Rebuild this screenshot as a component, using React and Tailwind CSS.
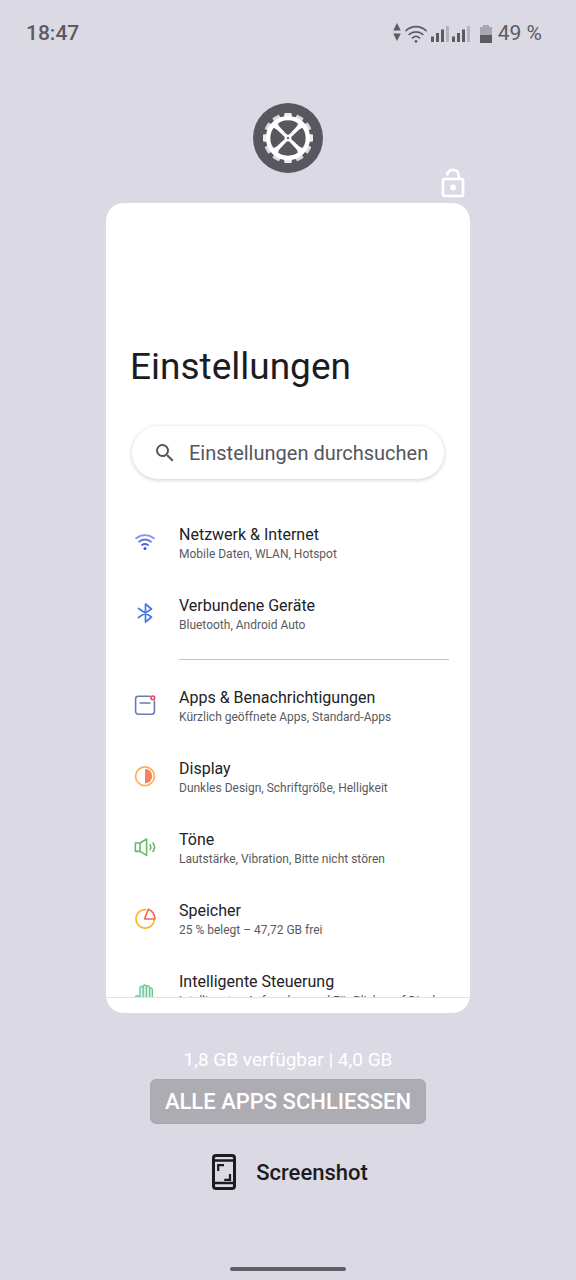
import { useState } from "react";

const WifiIcon = () => (
  <svg viewBox="0 0 24 24" className="w-6 h-6" fill="none" strokeWidth="1.8" strokeLinecap="round">
    <path d="M3 8.2c5.5-4.200 12.500-4.200 18 0" stroke="#8492ec" />
    <path d="M6 11.800c3.700-2.800 8.300-2.800 12 0" stroke="#6478e6" />
    <path d="M9 15c1.900-1.300 4.100-1.300 6 0" stroke="#4d62e0" />
    <circle cx="12" cy="18.600" r="1.500" fill="#3f52dc" />
  </svg>
);

const BluetoothIcon = () => (
  <svg
    viewBox="0 0 24 24"
    className="w-6 h-6"
    fill="none"
    stroke="#4a78e0"
    strokeWidth="1.7"
    strokeLinecap="round"
    strokeLinejoin="round"
  >
    <path d="M5.500 7.500L18.500 16l-6 5V3l6 5-13 8.500" />
  </svg>
);

const AppsIcon = () => (
  <svg viewBox="0 0 24 24" className="w-6 h-6" fill="none" strokeLinecap="round">
    <path
      d="M17 3.2H5.2a2.6 2.6 0 0 0-2.6 2.6v12.8a2.6 2.6 0 0 0 2.6 2.6h13.6a2.6 2.6 0 0 0 2.6-2.6V8"
      stroke="#6c7bae"
      strokeWidth="1.6"
    />
    <path d="M7.2 10h9.6" stroke="#6c7bae" strokeWidth="1.6" />
    <circle cx="19.8" cy="4.8" r="1.9" stroke="#f0405c" strokeWidth="1.5" />
  </svg>
);

const DisplayIcon = () => (
  <svg viewBox="0 0 24 24" className="w-6 h-6" fill="none">
    <circle cx="12" cy="12.2" r="9.4" stroke="#f8b254" strokeWidth="1.7" />
    <path d="M12 5a7.2 7.2 0 0 1 0 14.4z" fill="#fb7f5a" />
  </svg>
);

const SoundIcon = () => (
  <svg
    viewBox="0 0 24 24"
    className="w-6 h-6"
    fill="none"
    stroke="#66ba6a"
    strokeWidth="1.6"
    strokeLinejoin="round"
    strokeLinecap="round"
  >
    <path d="M2.4 8H7v8.4H2.4zM7 8l6.600-4v16.400L7 16.400" />
    <path d="M17 9.800c1 1.500 1 3.300 0 4.800M20 8c2 2.600 2 5.800 0 8.400" />
  </svg>
);

const StorageIcon = () => (
  <svg viewBox="0 0 24 24" className="w-6 h-6" fill="none" strokeWidth="1.7" strokeLinejoin="round">
    <path d="M12.600 3.600a9.300 9.300 0 1 0 8.800 10.600" stroke="#fbb52c" strokeLinecap="round" />
    <path d="M15.400 3.200L11.600 12.800l10.400.2c-.2-4.600-2.600-8.200-6.600-9.800z" stroke="#f0694a" />
  </svg>
);

const HandIcon = () => (
  <svg
    viewBox="0 0 24 24"
    className="w-6 h-6"
    fill="#d9f2e4"
    stroke="#6cc795"
    strokeWidth="1.3"
    strokeLinejoin="round"
    strokeLinecap="round"
  >
    <path d="M7 19v-7.500a1.600 1.600 0 0 1 3.200-1V9.600a1.600 1.600 0 0 1 3.200 0v.4a1.600 1.600 0 0 1 3.200.8v1a1.500 1.500 0 0 1 2.800.6V24H8L2.600 21c-.6-2 1.400-3.400 4.400-1z" />
    <path d="M10.200 10.500V20M13.400 10v10M16.600 11v9" />
  </svg>
);

const sections = [
  [
    { icon: WifiIcon, title: "Netzwerk & Internet", text: "Mobile Daten, WLAN, Hotspot" },
    { icon: BluetoothIcon, title: "Verbundene Geräte", text: "Bluetooth, Android Auto" },
  ],
  [
    {
      icon: AppsIcon,
      title: "Apps & Benachrichtigungen",
      text: "Kürzlich geöffnete Apps, Standard-Apps",
    },
    { icon: DisplayIcon, title: "Display", text: "Dunkles Design, Schriftgröße, Helligkeit" },
    { icon: SoundIcon, title: "Töne", text: "Lautstärke, Vibration, Bitte nicht stören" },
    { icon: StorageIcon, title: "Speicher", text: "25 % belegt – 47,72 GB frei" },
    {
      icon: HandIcon,
      title: "Intelligente Steuerung",
      text: "Intelligentes Aufwachen und Für Blicke auf Display",
      cut: true,
    },
  ],
];

function StatusBar() {
  return (
    <header className="flex h-[66px] items-center justify-between pl-[26px] pr-[34px] pt-[2px] text-[21px] text-[#5c5b60]">
      <span className="font-medium">18:47</span>
      <div className="flex items-center">
        <svg viewBox="0 0 8 18" className="w-2 h-[18px] mb-1" fill="currentColor">
          <path d="M4 0l3.800 7.600H.2zM4 18l3.800-7.600H.2z" />
        </svg>
        <svg
          viewBox="0 0 24 20"
          className="w-6 h-5 ml-[3px]"
          fill="none"
          stroke="currentColor"
          strokeWidth="1.7"
          strokeLinecap="round"
        >
          <path d="M2 6.600c6-5.200 14-5.200 20 0M5.200 10.400c4-3.500 9.600-3.500 13.600 0M8.500 13.900c2-1.700 5-1.700 7 0" />
          <circle cx="12" cy="17.400" r="1.400" fill="currentColor" stroke="none" />
        </svg>
        {[0, 1].map((sim) => (
          <svg key={sim} viewBox="0 0 18 18" className="w-[18px] h-[18px] ml-[3px]" fill="currentColor">
            <path d="M0 11.500h3V17H0zM5 8h3v9H5zM10 4.500h3V17h-3z" />
            <path d="M15 1h3v16h-3z" opacity=".3" />
          </svg>
        ))}
        <svg viewBox="0 0 12 18" className="w-3 h-[18px] ml-[10px]" fill="currentColor">
          <path d="M3 0h6v2h3v8H0V2h3z" opacity=".4" />
          <path d="M0 10h12v8H0z" />
        </svg>
        <span className="ml-[6px]">49 %</span>
      </div>
    </header>
  );
}

function GearIcon() {
  const spokes = [45, 135, 225, 315];
  const teeth = [0, 30, 60, 90, 120, 150, 180, 210, 240, 270, 300, 330];
  return (
    <svg viewBox="0 0 70 70" className="w-[70px] h-[70px]">
      <circle cx="35" cy="35" r="35" fill="#57575f" />
      {teeth.map((a) => (
        <rect
          key={a}
          x="31.200"
          y="10"
          width="7.600"
          height="7"
          rx="1"
          fill={a % 90 === 0 ? "#ececec" : "#dadada"}
          transform={`rotate(${a} 35 35)`}
        />
      ))}
      <circle cx="35" cy="35" r="19.900" fill="none" stroke="#fff" strokeWidth="4.400" />
      {spokes.map((a) => (
        <path
          key={a}
          d="M33.500 35L33 21Q32.800 18.500 30.500 16.500H39.500Q37.200 18.500 37 21L36.500 35z"
          fill="#fff"
          transform={`rotate(${a} 35 35)`}
        />
      ))}
      <circle cx="35" cy="35" r="3.400" fill="#fff" />
      <circle cx="35" cy="35" r="1.300" fill="#77777f" />
    </svg>
  );
}

function SettingRow({ icon: Icon, title, text, cut }) {
  return (
    <li className={cut ? "h-[41px] overflow-hidden" : ""}>
      <a href="#" className="flex h-[71px] items-center pb-[2px] pl-[27px]">
        <div className="mb-1">
          <Icon />
        </div>
        <div className="ml-[22px] whitespace-nowrap">
          <div className="text-base leading-5 text-[#222226]">{title}</div>
          <div className="text-xs leading-[18px] text-[#5a5a60]">{text}</div>
        </div>
      </a>
    </li>
  );
}

export default function App() {
  const [query, setQuery] = useState("");

  return (
    <div className="flex min-h-screen flex-col bg-[#dbd9e3] font-['Roboto',sans-serif]">
      <StatusBar />

      <main className="flex flex-col px-[106px] pt-[37px]">
        <div className="grid grid-cols-3 items-end">
          <button type="button" aria-label="Einstellungen" className="col-start-2 mb-[30px] justify-self-center">
            <GearIcon />
          </button>
          <button type="button" aria-label="App sperren" className="mb-1 mr-[5px] justify-self-end">
            <svg viewBox="0 0 24 32" className="w-6 h-8" fill="none" stroke="#fff" strokeWidth="2.700">
              <rect x="2" y="12" width="20" height="17" rx="1.500" />
              <path d="M6.200 8.500C6.200 1 17.600 1 17.600 8v4" />
              <circle cx="12" cy="20.500" r="2.900" fill="#fff" stroke="none" />
            </svg>
          </button>
        </div>

        <section className="overflow-hidden rounded-[18px] bg-white pb-[15px] pt-[140px]">
          <h1 className="pl-6 text-[37px] leading-[48px] text-[#1c1c1f]">Einstellungen</h1>

          <label className="mx-[26px] mt-[35px] flex h-[53px] items-center rounded-full bg-white pl-[21px] shadow-[0_1px_4px_rgba(0,0,0,0.2)]">
            <svg viewBox="0 0 24 24" className="w-6 h-6 shrink-0" fill="#55555d">
              <path d="M15.500 14h-.79l-.28-.27A6.470 6.470 0 0 0 16 9.500 6.500 6.500 0 1 0 9.500 16c1.610 0 3.090-.59 4.230-1.570l.27.28v.79l5 4.990L20.490 19l-4.990-5zm-6 0C7.010 14 5 11.990 5 9.500S7.010 5 9.500 5 14 7.010 14 9.500 11.990 14 9.500 14z" />
            </svg>
            <input
              type="text"
              aria-label="Einstellungen durchsuchen"
              placeholder="Einstellungen durchsuchen"
              value={query}
              onChange={(e) => setQuery(e.target.value)}
              className="ml-3 w-full min-w-0 bg-transparent text-xl text-[#55555d] outline-none placeholder:text-[#55555d]"
            />
          </label>

          <ul className="mt-[30px]">
            {sections[0].map((item) => (
              <SettingRow key={item.title} {...item} />
            ))}
          </ul>
          <hr className="mb-3 ml-[73px] mr-[21px] mt-2 border-[#c4c4c4]" />
          <ul className="border-b border-[#e2e2e6]">
            {sections[1].map((item) => (
              <SettingRow key={item.title} {...item} />
            ))}
          </ul>
        </section>

        <div className="mt-[35px] flex flex-col items-center">
          <p className="text-[19px] leading-6 text-white">1,8 GB verfügbar | 4,0 GB</p>
          <button
            type="button"
            className="mt-[7px] h-[45px] rounded-md border border-[#a8a7ad] bg-[#adacb2] px-[14px] text-[22px] font-medium text-white"
          >
            ALLE APPS SCHLIESSEN
          </button>
          <button type="button" className="mt-[30px] flex items-center gap-5 pl-1 text-[22px] font-medium text-[#1c1c20]">
            <svg viewBox="0 0 24 36" className="w-6 h-9" fill="none" stroke="currentColor">
              <rect x="1.500" y="1.500" width="21" height="33" rx="2.500" strokeWidth="3" />
              <path d="M2 6.500h20M2 29h20" strokeWidth="2.500" />
              <path d="M6.200 17v-5.800H12M18 20v5.800h-5.800" strokeWidth="2.200" />
            </svg>
            Screenshot
          </button>
        </div>
      </main>

      <footer className="mt-auto flex justify-center pb-[9px]">
        <div className="h-1 w-[116px] rounded-full bg-[#5f5e64]" />
      </footer>
    </div>
  );
}
